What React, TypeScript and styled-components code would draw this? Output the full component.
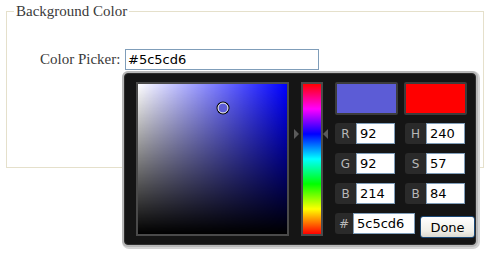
import React from "react";
import styled, { createGlobalStyle } from "styled-components";

const Global = createGlobalStyle`
  html, body { margin: 0; padding: 0; background: #fff; }
  body { width: 491px; height: 258px; overflow: hidden; }
`;

const Page = styled.div`
  padding: 3px 7px 0 6px;
`;

const Fieldset = styled.fieldset`
  margin: 0;
  padding: 0 0 97px 0;
  border: 1px solid #e5e0cb;
  min-width: 0;
`;

const Legend = styled.legend`
  margin-left: 7px;
  padding: 0 2px;
  font-family: "Liberation Serif", serif;
  font-size: 15px;
  line-height: 17px;
  color: #3a3a3a;
`;

const Row = styled.div`
  display: flex;
  align-items: center;
  margin-top: 29px;
  padding-left: 33px;
`;

const Label = styled.label`
  font-family: "Liberation Serif", serif;
  font-size: 15px;
  color: #3a3a3a;
  width: 85px;
`;

const InputWrap = styled.div`
  position: relative;
`;

const MainInput = styled.input`
  box-sizing: border-box;
  width: 194px;
  height: 21px;
  border: 1px solid #7f9db9;
  padding: 0 2px;
  font-family: "DejaVu Sans", sans-serif;
  font-size: 13px;
  color: #000;
  outline: none;
`;

const Popup = styled.div`
  position: absolute;
  left: -1px;
  top: 24px;
  box-sizing: border-box;
  width: 352px;
  height: 172px;
  background: #151515;
  border: 1px solid #2e2e2e;
  border-radius: 4px;
  box-shadow: 0 0 0 2px #b8b8b8, 1px 1px 0 3px #d4d4d4;
  padding: 8px 0 0 11px;
  display: flex;
  z-index: 2;
`;

const SVBox = styled.div`
  position: relative;
  box-sizing: border-box;
  width: 154px;
  height: 154px;
  border: 2px solid #4a4a4a;
  background:
    linear-gradient(to bottom, rgba(0,0,0,0), #000),
    linear-gradient(to right, #fff, rgba(255,255,255,0)),
    #0000ff;
`;

const Marker = styled.div`
  position: absolute;
  width: 9px;
  height: 9px;
  border-radius: 50%;
  border: 1px solid #fff;
  box-shadow: 0 0 0 1px #000;
  transform: translate(-50%, -50%);
`;

const HueColumn = styled.div`
  position: relative;
  width: 46px;
  display: flex;
  justify-content: center;
`;

const HueBar = styled.div`
  box-sizing: border-box;
  width: 22px;
  height: 154px;
  border: 2px solid #4a4a4a;
  background: linear-gradient(
    to bottom,
    #ff0000 0%,
    #ff00ff 16.67%,
    #0000ff 33.33%,
    #00ffff 50%,
    #00ff00 66.67%,
    #ffff00 83.33%,
    #ff0000 100%
  );
`;

const Arrow = styled.div<{ $side: "left" | "right" }>`
  position: absolute;
  width: 0;
  height: 0;
  border-top: 5px solid transparent;
  border-bottom: 5px solid transparent;
  ${(p) =>
    p.$side === "left"
      ? "left: 5px; border-left: 5px solid #5a5a5a;"
      : "right: 7px; border-right: 5px solid #5a5a5a;"}
`;

const Controls = styled.div`
  display: flex;
  flex-direction: column;
`;

const SwatchRow = styled.div`
  display: flex;
  gap: 6px;
  margin-bottom: 8px;
`;

const Swatch = styled.div<{ $color: string }>`
  box-sizing: border-box;
  width: 63px;
  height: 33px;
  border: 2px solid #3c3c3c;
  border-radius: 2px;
  background: ${(p) => p.$color};
`;

const FieldRow = styled.div`
  display: flex;
  gap: 10px;
  margin-bottom: 9px;
`;

const Field = styled.div<{ $w: number }>`
  box-sizing: border-box;
  display: flex;
  width: ${(p) => p.$w}px;
  height: 21px;
  background: #2a2a2a;
  border-radius: 3px;
`;

const FieldLabel = styled.span<{ $w: number }>`
  width: ${(p) => p.$w}px;
  display: flex;
  align-items: center;
  justify-content: center;
  font-family: "DejaVu Sans", sans-serif;
  font-size: 12px;
  color: #b8b8b8;
`;

const FieldInput = styled.input`
  box-sizing: border-box;
  flex: 1;
  min-width: 0;
  height: 21px;
  border: 1px solid #7f9db9;
  padding: 0 3px;
  font-family: "DejaVu Sans", sans-serif;
  font-size: 13px;
  color: #000;
  background: #fff;
  outline: none;
`;

const HexRow = styled.div`
  display: flex;
  gap: 5px;
`;

const DoneButton = styled.button`
  box-sizing: border-box;
  margin-top: 3px;
  width: 55px;
  height: 22px;
  border: 1px solid #1c4a78;
  border-radius: 3px;
  background: linear-gradient(to bottom, #ffffff, #f0efe8 70%, #dcdad0);
  font-family: "DejaVu Sans", sans-serif;
  font-size: 13px;
  color: #000;
  padding: 0;
`;

const fields = [
  ["R", "92", "H", "240"],
  ["G", "92", "S", "57"],
  ["B", "214", "B", "84"],
];

export default function App() {
  const s = 57;
  const v = 84;
  const hue = 240;
  const arrowTop = (1 - hue / 360) * 150 + 2 - 5;
  return (
    <Page>
      <Global />
      <Fieldset>
        <Legend>Background Color</Legend>
        <Row>
          <Label>Color Picker:</Label>
          <InputWrap>
            <MainInput defaultValue="#5c5cd6" />
            <Popup>
              <SVBox>
                <Marker style={{ left: `${(s / 100) * 150 - 0.5}px`, top: `${(1 - v / 100) * 150}px`, background: "#5c5cd6" }} />
              </SVBox>
              <HueColumn>
                <Arrow $side="left" style={{ top: `${arrowTop}px` }} />
                <HueBar />
                <Arrow $side="right" style={{ top: `${arrowTop}px` }} />
              </HueColumn>
              <Controls>
                <SwatchRow>
                  <Swatch $color="#5c5cd6" />
                  <Swatch $color="#ff0000" />
                </SwatchRow>
                {fields.map(([a, av, b, bv], i) => (
                  <FieldRow key={i}>
                    <Field $w={60}>
                      <FieldLabel $w={21}>{a}</FieldLabel>
                      <FieldInput defaultValue={av} />
                    </Field>
                    <Field $w={60}>
                      <FieldLabel $w={21}>{b}</FieldLabel>
                      <FieldInput defaultValue={bv} />
                    </Field>
                  </FieldRow>
                ))}
                <HexRow>
                  <Field $w={80}>
                    <FieldLabel $w={18}>#</FieldLabel>
                    <FieldInput defaultValue="5c5cd6" />
                  </Field>
                  <DoneButton>Done</DoneButton>
                </HexRow>
              </Controls>
            </Popup>
          </InputWrap>
        </Row>
      </Fieldset>
    </Page>
  );
}
